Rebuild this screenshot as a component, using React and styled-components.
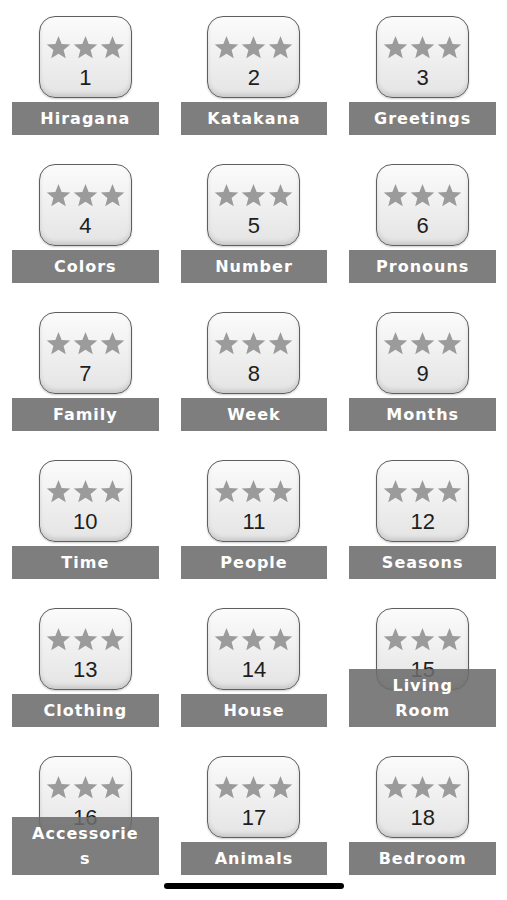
import React from 'react'
import styled, { createGlobalStyle } from 'styled-components'

const lessons = [
  'Hiragana', 'Katakana', 'Greetings',
  'Colors', 'Number', 'Pronouns',
  'Family', 'Week', 'Months',
  'Time', 'People', 'Seasons',
  'Clothing', 'House', 'Living Room',
  'Accessories', 'Animals', 'Bedroom',
]

const Global = createGlobalStyle`
  html, body {
    margin: 0;
    background: #fff;
    font-family: "Liberation Sans", Arial, sans-serif;
  }
`

const Page = styled.div`
  width: 507px;
  height: 900px;
  overflow: hidden;
  display: flex;
  flex-direction: column;
`

const Grid = styled.div`
  display: grid;
  grid-template-columns: repeat(3, 1fr);
  column-gap: 22px;
  row-gap: 29px;
  padding: 16px 11px 0 12px;
`

const Cell = styled.div`
  display: grid;
  height: 119px;
  justify-items: center;

  & > * {
    grid-area: 1 / 1;
  }
`

const Tile = styled.div`
  align-self: start;
  width: 93px;
  height: 82px;
  box-sizing: border-box;
  border: 1.5px solid #5e5e5e;
  border-radius: 16px;
  background: linear-gradient(#fbfbfb, #e4e4e4);
  box-shadow: inset 0 -3px 4px rgba(0, 0, 0, 0.12), 0 1px 2px rgba(0, 0, 0, 0.2);
  display: flex;
  flex-direction: column;
  align-items: center;
  padding-top: 18px;
`

const Stars = styled.div`
  display: flex;
`

const Num = styled.div`
  margin-top: 6px;
  font-size: 22px;
  line-height: 24px;
  color: #1e1e1e;
`

const Label = styled.div`
  align-self: end;
  justify-self: stretch;
  min-height: 33px;
  box-sizing: border-box;
  padding: 4px 17px;
  background: rgba(108, 108, 108, 0.88);
  color: #fff;
  font-family: "DejaVu Sans", "Liberation Sans", sans-serif;
  font-weight: bold;
  font-size: 16px;
  letter-spacing: 1px;
  line-height: 25px;
  text-align: center;
  overflow-wrap: anywhere;
  display: flex;
  align-items: center;
  justify-content: center;
`

const HomeBar = styled.div`
  align-self: center;
  margin-top: 8px;
  width: 180px;
  height: 6px;
  border-radius: 3px;
  background: #000;
`

function Star() {
  return (
    <svg width="27" height="25" viewBox="0 0 24 23">
      <polygon
        points="12,1 14.9,8.3 22.8,8.8 16.7,13.8 18.7,21.5 12,17.2 5.3,21.5 7.3,13.8 1.2,8.8 9.1,8.3"
        fill="#9b9b9b"
      />
    </svg>
  )
}

export default function App() {
  return (
    <Page>
      <Global />
      <Grid>
        {lessons.map((name, i) => (
          <Cell key={name}>
            <Tile>
              <Stars>
                <Star />
                <Star />
                <Star />
              </Stars>
              <Num>{i + 1}</Num>
            </Tile>
            <Label>{name}</Label>
          </Cell>
        ))}
      </Grid>
      <HomeBar />
    </Page>
  )
}
